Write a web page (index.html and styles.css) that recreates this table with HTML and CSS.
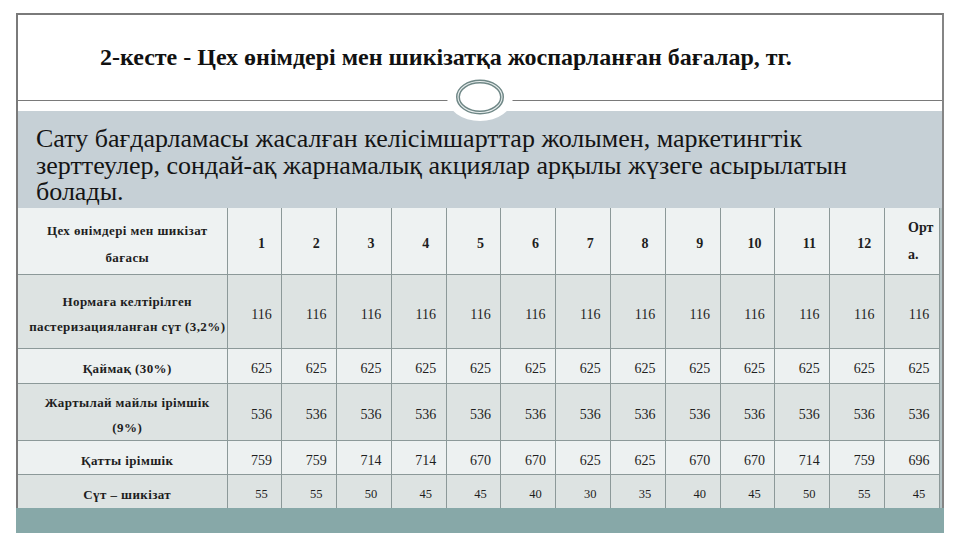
FILE: index.html
```html
<!DOCTYPE html>
<html lang="kk">
<head>
<meta charset="utf-8">
<title>2-кесте</title>
<link rel="stylesheet" href="styles.css">
</head>
<body>
<div class="slide">
  <div class="frame">
    <div class="head">
      <h1 class="title">2-кесте - Цех өнімдері мен шикізатқа жоспарланған бағалар, тг.</h1>
    </div>
    <div class="divider">
      <svg class="ring" width="70" height="50" viewBox="0 0 70 50">
        <ellipse cx="35" cy="25" rx="33" ry="24" fill="#ffffff"/>
        <ellipse cx="35" cy="25" rx="22" ry="15.5" fill="#ffffff" stroke="#6f8786" stroke-width="4"/>
        <ellipse cx="35" cy="25" rx="22" ry="15.5" fill="none" stroke="#e8eeee" stroke-width="1.1"/>
      </svg>
    </div>
    <div class="panel">
      <p class="lead">Сату бағдарламасы жасалған келісімшарттар жолымен, маркетингтік<br>зерттеулер, сондай-ақ жарнамалық акциялар арқылы жүзеге асырылатын<br>болады.</p>
    </div>
    <div class="table-wrap">
      <table class="prices">
        <colgroup>
          <col class="c-name">
          <col><col><col><col><col><col><col><col><col><col><col><col><col>
        </colgroup>
        <tr class="r-head">
          <td class="name hname">Цех өнімдері мен шикізат<br>бағасы</td>
          <td class="hnum">1</td><td class="hnum">2</td><td class="hnum">3</td><td class="hnum">4</td><td class="hnum">5</td><td class="hnum">6</td><td class="hnum">7</td><td class="hnum">8</td><td class="hnum">9</td><td class="hnum">10</td><td class="hnum">11</td><td class="hnum">12</td>
          <td class="hnum avg"><span class="avg-text">Орт<br>а.</span></td>
        </tr>
        <tr class="r1 dark">
          <td class="name">Нормаға келтірілген<br>пастеризацияланған сүт (3,2%)</td>
          <td>116</td><td>116</td><td>116</td><td>116</td><td>116</td><td>116</td><td>116</td><td>116</td><td>116</td><td>116</td><td>116</td><td>116</td><td>116</td>
        </tr>
        <tr class="r2 light">
          <td class="name">Қаймақ (30%)</td>
          <td>625</td><td>625</td><td>625</td><td>625</td><td>625</td><td>625</td><td>625</td><td>625</td><td>625</td><td>625</td><td>625</td><td>625</td><td>625</td>
        </tr>
        <tr class="r3 dark">
          <td class="name">Жартылай майлы ірімшік<br>(9%)</td>
          <td>536</td><td>536</td><td>536</td><td>536</td><td>536</td><td>536</td><td>536</td><td>536</td><td>536</td><td>536</td><td>536</td><td>536</td><td>536</td>
        </tr>
        <tr class="r4 light">
          <td class="name">Қатты ірімшік</td>
          <td>759</td><td>759</td><td>714</td><td>714</td><td>670</td><td>670</td><td>625</td><td>625</td><td>670</td><td>670</td><td>714</td><td>759</td><td>696</td>
        </tr>
        <tr class="r5 dark small">
          <td class="name">Сүт – шикізат</td>
          <td>55</td><td>55</td><td>50</td><td>45</td><td>45</td><td>40</td><td>30</td><td>35</td><td>40</td><td>45</td><td>50</td><td>55</td><td>45</td>
        </tr>
      </table>
    </div>
  </div>
  <div class="footer-bar"></div>
</div>
</body>
</html>
```

FILE: styles.css
```css
html, body {
  margin: 0;
  padding: 0;
  background: #ffffff;
}

body {
  font-family: "Liberation Serif", "Times New Roman", serif;
  color: #111111;
}

.slide {
  margin: 13px 0 0 16px;
  width: 928px;
}

.frame {
  border-top: 2px solid #7a7a7a;
  border-left: 2px solid #7a7a7a;
  border-right: 2px solid #858585;
  background: #ffffff;
}

.head {
  height: 85px;
  box-sizing: border-box;
  padding: 28px 0 0 82px;
}

.title {
  margin: 0;
  font-size: 24px;
  line-height: 28px;
  font-weight: bold;
  color: #111111;
  white-space: nowrap;
}

.divider {
  position: relative;
  height: 10px;
  border-top: 1px solid #7a7a7a;
}

.ring {
  position: absolute;
  left: 50%;
  top: -29px;
  margin-left: -35px;
  z-index: 2;
}

.panel {
  height: 97px;
  box-sizing: border-box;
  padding: 15px 0 0 18px;
  background: #c6d0d6;
}

.lead {
  margin: 0;
  font-size: 26px;
  line-height: 26.5px;
  color: #141414;
  white-space: nowrap;
}

.table-wrap {
  padding-right: 2px;
  background: #b4c3c5;
}

.prices {
  width: 100%;
  border-collapse: collapse;
  table-layout: fixed;
  color: #1e1e1e;
}

.c-name {
  width: 209px;
}

.prices td {
  border: 1px solid #8c9999;
  text-align: center;
  vertical-align: middle;
  padding: 6px 0 0 14px;
  font-size: 14px;
  line-height: 25px;
  white-space: nowrap;
}

.prices tr td:first-child {
  border-left: none;
}

.prices tr:first-child td {
  border-top: none;
}

.prices tr:last-child td {
  border-bottom: none;
}

.prices td.name {
  font-weight: bold;
  font-size: 13px;
  letter-spacing: 0.4px;
  padding-left: 10px;
}

.prices td.hname {
  line-height: 27px;
}

.prices td.hnum {
  font-weight: bold;
  font-size: 14px;
}

.prices td.avg {
  text-align: left;
  padding-left: 23px;
  line-height: 27px;
  padding-top: 0;
}

.r-head {
  height: 66px;
  background: #eef2f2;
}

.r1 { height: 74px; }
.r2 { height: 35px; }
.r3 { height: 51px; }
.r4 { height: 34px; }
.r5 { height: 34px; }

.dark {
  background: #dde3e2;
}

.light {
  background: #edf1f1;
}

.small td {
  font-size: 12.5px;
}

.small td.name {
  font-size: 13px;
}

.footer-bar {
  height: 25px;
  background: #87a8a8;
}
```
